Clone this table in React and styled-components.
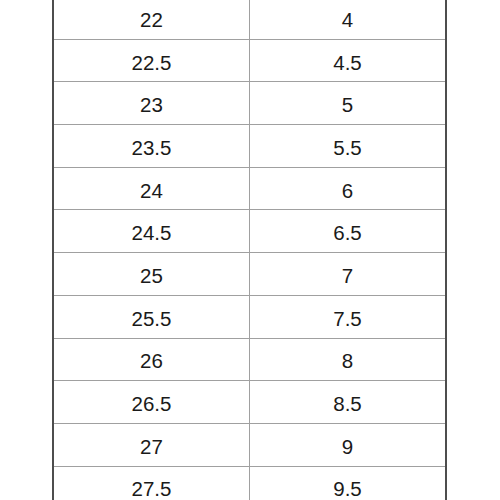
import React from "react";
import styled, { createGlobalStyle } from "styled-components";

const Global = createGlobalStyle`
    html, body {
        margin: 0;
        padding: 0;
        background: #ffffff;
        overflow: hidden;
        height: 500px;
    }
`;

const Sheet = styled.div`
    box-sizing: border-box;
    width: 395px;
    margin: -3px 0 0 52px;
    border-left: 2px solid #4d4d4d;
    border-right: 2px solid #4d4d4d;
    font-family: "Liberation Sans", Arial, sans-serif;
    color: #1a1a1a;
`;

const Row = styled.div`
    display: grid;
    grid-template-columns: 196px 1fr;
    height: 42.7px;
    box-sizing: border-box;
    border-bottom: 1px solid #a0a0a0;
`;

const Cell = styled.div`
    display: flex;
    align-items: center;
    justify-content: center;
    padding-top: 4px;
    box-sizing: border-box;
    font-size: 20.5px;
    border-right: ${(p) => (p.$first ? "1px solid #a0a0a0" : "none")};
`;

const sizes = [
    ["22", "4"],
    ["22.5", "4.5"],
    ["23", "5"],
    ["23.5", "5.5"],
    ["24", "6"],
    ["24.5", "6.5"],
    ["25", "7"],
    ["25.5", "7.5"],
    ["26", "8"],
    ["26.5", "8.5"],
    ["27", "9"],
    ["27.5", "9.5"],
];

export default function App() {
    return (
        <>
            <Global />
            <Sheet>
                {sizes.map(([cm, us]) => (
                    <Row key={cm}>
                        <Cell $first>{cm}</Cell>
                        <Cell>{us}</Cell>
                    </Row>
                ))}
            </Sheet>
        </>
    );
}
